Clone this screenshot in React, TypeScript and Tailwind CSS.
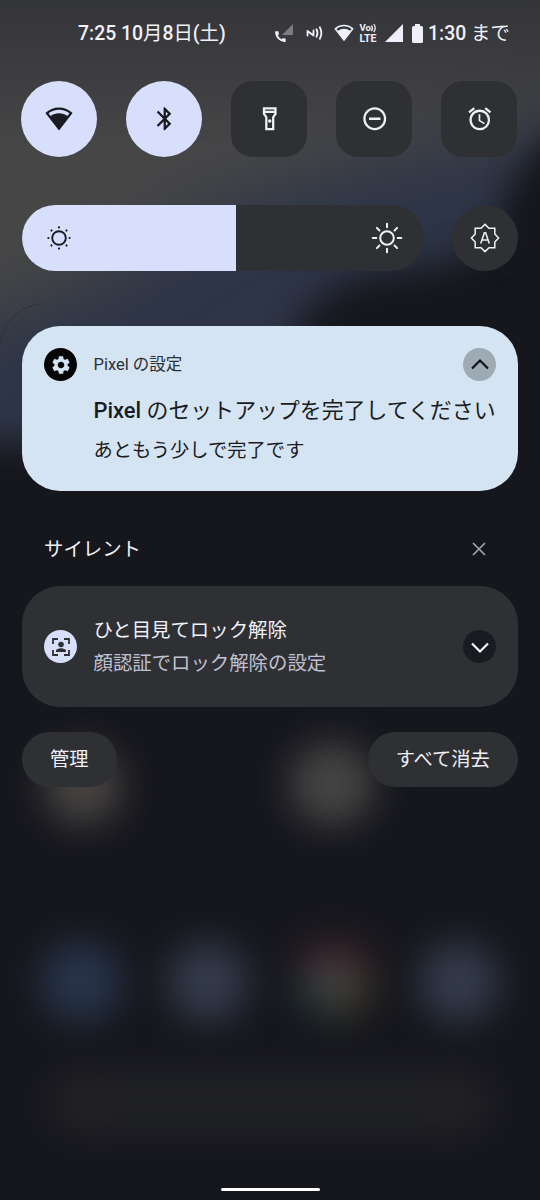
import React from 'react';
import {
  MdAlarm,
  MdBluetooth,
  MdOutlineFlashlightOn,
  MdRemoveCircleOutline,
  MdSettings,
} from 'react-icons/md';

interface IconProps {
  className?: string;
}

function WifiIcon({ className }: IconProps) {
  return (
    <svg viewBox="0 0 28 24" className={className}>
      <path
        fillRule="evenodd"
        fill="currentColor"
        d="M14 .4C8.8.4 4 2.4.4 6L14 23.6 27.6 6C24 2.400 19.200.4 14 .4ZM14 2.700c4 0 7.500 1.200 10.500 3.600l-2.100 2.700C20 7.200 17.200 6.200 14 6.200S8 7.200 5.600 9L3.500 6.300C6.500 3.900 10 2.700 14 2.700Z"
      />
    </svg>
  );
}

function CallSignalIcon() {
  return (
    <svg viewBox="0 0 20 20" className="h-5 w-5">
      <path d="M19 1v11H8z" fill="#7c7d81" />
      <path
        d="M2.200 9.200c0 4.800 3.800 8.700 8.600 8.700"
        fill="none"
        stroke="#eeeffa"
        strokeWidth="2"
      />
      <path d="M1.200 8.300h3.200l.6 3-2.200 1.600c-1-1.400-1.600-2.900-1.600-4.600ZM11.700 18.900v-3.200l-3-.6-1.600 2.100c1.400 1 2.900 1.600 4.600 1.700Z" fill="#eeeffa" />
    </svg>
  );
}

function NfcIcon() {
  return (
    <svg viewBox="0 0 18 16" className="h-4 w-[18px]" fill="none" stroke="#eeeffa" strokeWidth="1.800" strokeLinecap="round">
      <path d="M1.500 10.500V6l6 4.500V5.500" strokeLinejoin="round" />
      <path d="M10.500 4.200c1.300 2.400 1.300 5.200 0 7.600M13.800 2.200c2 3.700 2 7.900 0 11.600" />
    </svg>
  );
}

function VolteIcon() {
  return (
    <svg viewBox="0 -3 19 26" className="h-[26px] w-[19px] font-['Roboto',sans-serif]" fill="#eeeffa">
      <text x="0.500" y="8" fontSize="9.500" fontWeight="700" textLength="11.500" lengthAdjust="spacingAndGlyphs">Vo</text>
      <text x="0.500" y="18.800" fontSize="10.500" fontWeight="700" textLength="17" lengthAdjust="spacingAndGlyphs">LTE</text>
      <path d="M12.500 2.500c1.200 1.800 1.200 3.800 0 5.600M14.800 1c1.800 2.600 1.800 5.600 0 8.200" fill="none" stroke="#eeeffa" strokeWidth="1.300" />
    </svg>
  );
}

function StatusBar() {
  return (
    <div className="flex h-[66px] items-center pl-[78px] text-[19.400px] text-[#f1f1f8]">
      <span className="mt-0.5 w-[196px] whitespace-nowrap">
        <span className="font-medium">7:25 10</span>月<span className="font-medium">8</span>日
        <span className="font-medium">(</span>土<span className="font-medium">)</span>
      </span>
      <CallSignalIcon />
      <div className="ml-3">
        <NfcIcon />
      </div>
      <WifiIcon className="ml-2.5 h-[18px] w-5 text-[#eeeffa]" />
      <div className="ml-[5px]">
        <VolteIcon />
      </div>
      <svg viewBox="0 0 18 18" className="ml-[7px] h-[18px] w-[18px]" fill="#eeeffa">
        <path d="M18 0v18H0z" />
      </svg>
      <svg viewBox="0 0 11 19" className="ml-[9px] h-[19px] w-[11px]" fill="#eeeffa">
        <path d="M3 0h5v2h1.500Q11 2 11 3.500v14Q11 19 9.500 19h-8Q0 19 0 17.500v-14Q0 2 1.500 2H3z" />
      </svg>
      <span className="mt-0.5 ml-[5px] whitespace-nowrap">
        <span className="font-medium">1:30</span> まで
      </span>
    </div>
  );
}

interface TileProps {
  active?: boolean;
  children: React.ReactNode;
}

function Tile({ active, children }: TileProps) {
  return (
    <button
      className={
        active
          ? 'flex h-[76px] w-[76px] items-center justify-center rounded-full bg-[#d8dffd] text-[#191b20]'
          : 'flex h-[76px] w-[76px] items-center justify-center rounded-[22px] bg-[#2f3034] text-[#f0f0f7]'
      }
    >
      {children}
    </button>
  );
}

const ANGLES = [0, 45, 90, 135, 180, 225, 270, 315];

function BrightnessRow() {
  return (
    <div className="mt-12 flex items-center justify-between px-[22px]">
      <div className="flex h-[66px] w-[402px] overflow-hidden rounded-full bg-[#2f3034]">
        <div className="flex w-[213.500px] items-center bg-[#d8dffd] pl-[25px]">
          <svg viewBox="-12 -12 24 24" className="h-6 w-6 text-[#191b20]">
            <circle r="6.800" fill="none" stroke="currentColor" strokeWidth="1.900" />
            {ANGLES.map(a => (
              <circle key={a} cx="10.600" r="1.100" fill="currentColor" transform={`rotate(${a})`} />
            ))}
          </svg>
        </div>
        <div className="flex flex-1 items-center justify-end pr-[21px]">
          <svg viewBox="-16 -16 32 32" className="h-8 w-8" fill="none" stroke="#f0f0f7" strokeWidth="2" strokeLinecap="round">
            <circle r="6.800" />
            {ANGLES.map(a => (
              <path key={a} d="M10.700 0h3.600" transform={`rotate(${a})`} />
            ))}
          </svg>
        </div>
      </div>
      <button className="flex h-[66px] w-[66px] items-center justify-center rounded-full bg-[#2f3034]">
        <svg viewBox="-15 -15 30 30" className="h-[30px] w-[30px]" fill="none" stroke="#f0f0f7" strokeWidth="1.500">
          <path d="M0-13.600 4-9.800H9.800V-4L13.600 0 9.800 4V9.800H4L0 13.600-4 9.800H-9.800V4L-13.600 0-9.800-4V-9.800H-4Z" />
          <path d="M-4.300 5.500-.6-5.300H.6L4.300 5.500M-3 2H3" />
        </svg>
      </button>
    </div>
  );
}

function SetupCard() {
  return (
    <div className="mx-[22px] mt-[55px] flex h-[165px] items-start rounded-[38px] bg-[#d5e4f3] pt-[22px] pl-[22px] text-[#191c1f]">
      <div className="flex h-[33px] w-[33px] shrink-0 items-center justify-center rounded-full bg-[#060606]">
        <MdSettings size={22} color="#d5e4f3" />
      </div>
      <div className="ml-[16.500px] flex-1">
        <div className="flex h-[33px] items-center justify-between pr-[22px]">
          <span className="mt-0.5 text-[16.500px] text-[#2b3035]">Pixel の設定</span>
          <span className="flex h-[33px] w-[33px] items-center justify-center rounded-full bg-[#9faab4]">
            <svg viewBox="0 0 20 12" className="mb-0.5 h-3 w-5" fill="none" stroke="#111316" strokeWidth="2.200">
              <path d="m2 10.500 8-8 8 8" />
            </svg>
          </span>
        </div>
        <div className="mt-3.5 h-8 text-[21.900px] leading-8 whitespace-nowrap">
          <span className="font-medium">Pixel</span> のセットアップを完了してください
        </div>
        <div className="mt-2.5 h-7 text-[19.300px] leading-7">あともう少しで完了です</div>
      </div>
    </div>
  );
}

function FaceUnlockCard() {
  return (
    <div className="mx-[22px] mt-[22px] flex h-[121px] items-center rounded-[38px] bg-[#2f3034] px-[22px]">
      <div className="flex h-[33px] w-[33px] shrink-0 items-center justify-center rounded-full bg-[#d8dffd]">
        <svg viewBox="0 0 18 18" className="h-[18px] w-[18px]" fill="none" stroke="#2f3034" strokeWidth="1.800">
          <path d="M1 6V1h5M12 1h5v5M17 12v5h-5M6 17H1v-5" />
          <circle cx="9" cy="6.500" r="2.800" fill="#2f3034" stroke="none" />
          <path d="M4 14v-1c0-1.800 2.800-2.700 5-2.700s5 .9 5 2.700v1z" fill="#2f3034" stroke="none" />
        </svg>
      </div>
      <div className="ml-[16.500px] flex-1 text-[19.400px] leading-[33px]">
        <div className="text-[#f1f1f8]">ひと目見てロック解除</div>
        <div className="text-[#c0c1d0]">顔認証でロック解除の設定</div>
      </div>
      <span className="flex h-[33px] w-[33px] items-center justify-center rounded-full bg-[#191b20]">
        <svg viewBox="0 0 20 12" className="mt-0.5 h-3 w-5" fill="none" stroke="#f6f6fc" strokeWidth="2.200">
          <path d="m2 1.500 8 8 8-8" />
        </svg>
      </span>
    </div>
  );
}

// blurred home screen behind the shade
function Wallpaper() {
  return (
    <svg viewBox="0 0 540 1200" className="absolute inset-0 h-[1200px] w-[540px]">
      <defs>
        <filter id="soft" x="-50%" y="-50%" width="200%" height="200%" colorInterpolationFilters="sRGB">
          <feGaussianBlur stdDeviation="18" />
        </filter>
        <filter id="wide" x="-50%" y="-50%" width="200%" height="200%" colorInterpolationFilters="sRGB">
          <feGaussianBlur stdDeviation="34" />
        </filter>
        <linearGradient id="top" x1="0" y1="0" x2="0" y2="1">
          <stop offset="0" stopColor="#303136" stopOpacity=".8" />
          <stop offset="1" stopColor="#303136" stopOpacity="0" />
        </linearGradient>
      </defs>
      <rect width="540" height="1200" fill="#16171d" />
      <path d="M-80-80H640V110L550 130 512 190 494 240 440 264 350 278 305 310 285 360 120 440-80 444Z" fill="#2e3547" filter="url(#soft)" />
      <path d="M-120-120H700V75L540 125 360 165 210 210 100 280-120 365Z" fill="#464647" filter="url(#wide)" />
      <path d="M620 115 560 140 528 180 515 250H620Z" fill="#16171d" filter="url(#soft)" />
      <rect width="540" height="150" fill="url(#top)" />
      <path d="M0 345C3 322 18 306 42 304" fill="none" stroke="#23262e" strokeOpacity=".5" />
      <g filter="url(#soft)">
        <circle cx="83" cy="786" r="39" fill="#484442" />
        <circle cx="332" cy="784" r="42" fill="#464544" />
        <circle cx="81" cy="982" r="40" fill="#28354c" />
        <circle cx="208" cy="982" r="40" fill="#343b4c" />
        <path d="M294 975a40 40 0 0 1 76-12l-38 18z" fill="#3c2329" />
        <path d="M370 963a40 40 0 0 1-36 58l-2-40z" fill="#3b3529" />
        <path d="M294 975a40 40 0 0 0 40 46l-2-40z" fill="#213531" />
        <circle cx="332" cy="981" r="19" fill="#46484c" />
        <circle cx="459" cy="982" r="40" fill="#343b4c" />
        <rect x="50" y="1072" width="442" height="62" rx="31" fill="#202125" />
        <circle cx="78" cy="1103" r="17" fill="#272427" />
        <circle cx="455" cy="1103" r="20" fill="#232326" />
      </g>
    </svg>
  );
}

export default function App() {
  return (
    <div className="relative h-[1200px] w-[540px] overflow-hidden bg-[#16171d] font-['Roboto','Noto_Sans_CJK_JP',sans-serif]">
      <Wallpaper />
      <div className="relative flex h-full flex-col">
        <StatusBar />
        <div className="mt-[15px] flex justify-between pr-[22.600px] pl-[21.400px]">
          <Tile active>
            <WifiIcon className="h-6 w-7" />
          </Tile>
          <Tile active>
            <MdBluetooth size={27.5} />
          </Tile>
          <Tile>
            <MdOutlineFlashlightOn size={27.5} />
          </Tile>
          <Tile>
            <MdRemoveCircleOutline size={27.5} />
          </Tile>
          <Tile>
            <MdAlarm size={27.5} />
          </Tile>
        </div>
        <BrightnessRow />
        <SetupCard />
        <div className="mt-[43px] flex h-[30px] items-center justify-between pr-[54px] pl-11 text-[#f1f1f8]">
          <span className="mt-0.5 text-[19.400px]">サイレント</span>
          <svg viewBox="0 0 14 14" className="h-3.5 w-3.5" stroke="#a2a3a6" strokeWidth="1.700">
            <path d="m1 1 12 12M13 1 1 13" />
          </svg>
        </div>
        <FaceUnlockCard />
        <div className="mt-[25px] flex justify-between px-[22px] text-[19.250px] text-[#f1f1f8]">
          <button className="h-[55px] w-[94.500px] rounded-full bg-[#2f3034] pt-0.5">管理</button>
          <button className="h-[55px] w-[150.500px] rounded-full bg-[#2f3034] pt-0.5">すべて消去</button>
        </div>
        <div className="mt-auto mb-[9px] h-[3px] w-[99px] self-center rounded-full bg-white" />
      </div>
    </div>
  );
}
